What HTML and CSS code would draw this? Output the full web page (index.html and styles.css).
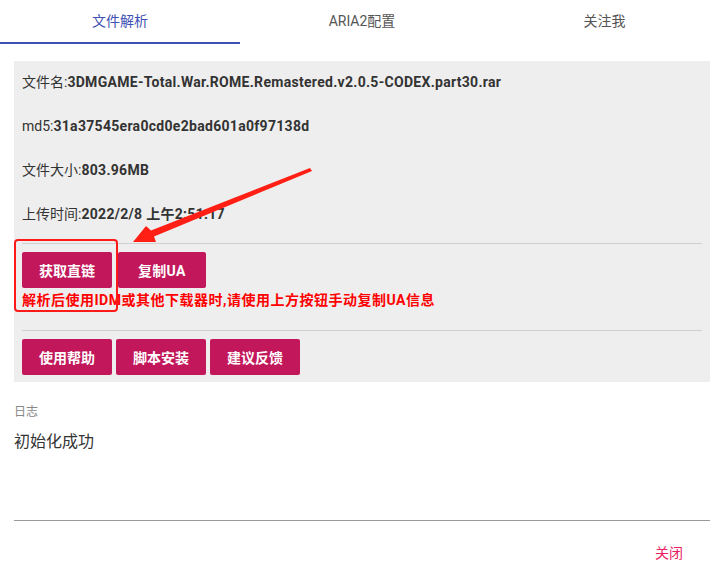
FILE: index.html
```html
<!DOCTYPE html>
<html lang="zh-CN">

<head>
    <meta charset="UTF-8">
    <meta name="viewport" content="width=device-width, initial-scale=1.0">
    <title>文件解析</title>
    <link rel="stylesheet" href="styles.css">
</head>

<body>
    <div class="tabs">
        <div class="tab active">文件解析</div>
        <div class="tab">ARIA2配置</div>
        <div class="tab">关注我</div>
    </div>

    <div class="content">
        <div class="info-box">
            <p class="row">文件名:<b>3DMGAME-Total.War.ROME.Remastered.v2.0.5-CODEX.part30.rar</b></p>
            <p class="row">md5:<b>31a37545era0cd0e2bad601a0f97138d</b></p>
            <p class="row">文件大小:<b>803.96MB</b></p>
            <p class="row">上传时间:<b>2022/2/8 上午2:51:17</b></p>
            <hr class="divider">
            <div class="btn-row first">
                <button class="btn">获取直链</button>
                <button class="btn wide">复制UA</button>
            </div>
            <p class="warn">解析后使用IDM或其他下载器时,请使用上方按钮手动复制UA信息</p>
            <hr class="divider second">
            <div class="btn-row">
                <button class="btn">使用帮助</button>
                <button class="btn">脚本安装</button>
                <button class="btn">建议反馈</button>
            </div>
        </div>

        <div class="log">
            <label class="log-label">日志</label>
            <div class="log-text">初始化成功</div>
        </div>

        <div class="actions">
            <a class="close-btn">关闭</a>
        </div>
    </div>

    <!-- annotation drawn on top of the screenshot -->
    <svg class="mark" width="725" height="569" viewBox="0 0 725 569">
        <rect x="15" y="240" width="102" height="71" rx="3" fill="none" stroke="#ff1a1a" stroke-width="2" />
        <polygon fill="#ff1f14"
            points="133,242 146,226 151,230.5 310,168 312,171 154,236.5 156,242" />
    </svg>
</body>

</html>
```

FILE: styles.css
```css
body {
    margin: 0;
    font-family: Roboto, "Noto Sans CJK SC", sans-serif;
    font-size: 14px;
    color: #333;
    background: #fff;
    width: 725px;
    height: 569px;
    overflow: hidden;
    position: relative;
}

.tabs {
    display: flex;
    height: 44px;
}

.tab {
    flex: 1;
    text-align: center;
    line-height: 42px;
    color: #555;
    font-size: 14px;
}

.tab.active {
    flex: 0 0 240px;
    color: #3f51b5;
    border-bottom: 2px solid #3f51b5;
}

.tab:nth-child(2) {
    flex: 0 0 244px;
}

.content {
    padding: 17px 15px 0 14px;
}

.info-box {
    background-color: #eee;
    padding: 0 8px 7px 8px;
}

.row {
    margin: 0;
    height: 20px;
    line-height: 20px;
    padding: 11px 0 13px 0;
    white-space: nowrap;
}

.row b {
    font-weight: bold;
    letter-spacing: 0.3px;
}

.divider {
    border: none;
    border-top: 1px solid #d0d0d0;
    margin: 6px 0 8px 0;
}

.divider.second {
    margin-top: 20px;
}

.btn-row {
    display: flex;
    gap: 4px;
}

.btn-row.first {
    gap: 6px;
}

.btn {
    height: 36px;
    padding: 0 17px;
    background-color: #c2185b;
    color: #fff;
    border: none;
    border-radius: 2px;
    font-family: Roboto, "Noto Sans CJK SC", sans-serif;
    font-size: 14px;
    font-weight: bold;
    cursor: pointer;
}

.btn.wide {
    padding: 0 20px;
    letter-spacing: 0.3px;
}

.warn {
    margin: 2px 0 0 0;
    line-height: 20px;
    color: #ff0000;
    font-weight: bold;
    letter-spacing: 0.5px;
    white-space: nowrap;
}

.log {
    margin-top: 21px;
    border-bottom: 1px solid #999;
    height: 117px;
}

.log-label {
    display: block;
    font-size: 12px;
    color: #888;
    line-height: 18px;
}

.log-text {
    margin-top: 10px;
    font-size: 16px;
    line-height: 22px;
    color: #333;
}

.actions {
    display: flex;
    justify-content: flex-end;
    padding: 22px 27px 0 0;
}

.close-btn {
    color: #e91e63;
    font-size: 14px;
    line-height: 20px;
    cursor: pointer;
}

.mark {
    position: absolute;
    left: 0;
    top: 0;
    pointer-events: none;
}
```
